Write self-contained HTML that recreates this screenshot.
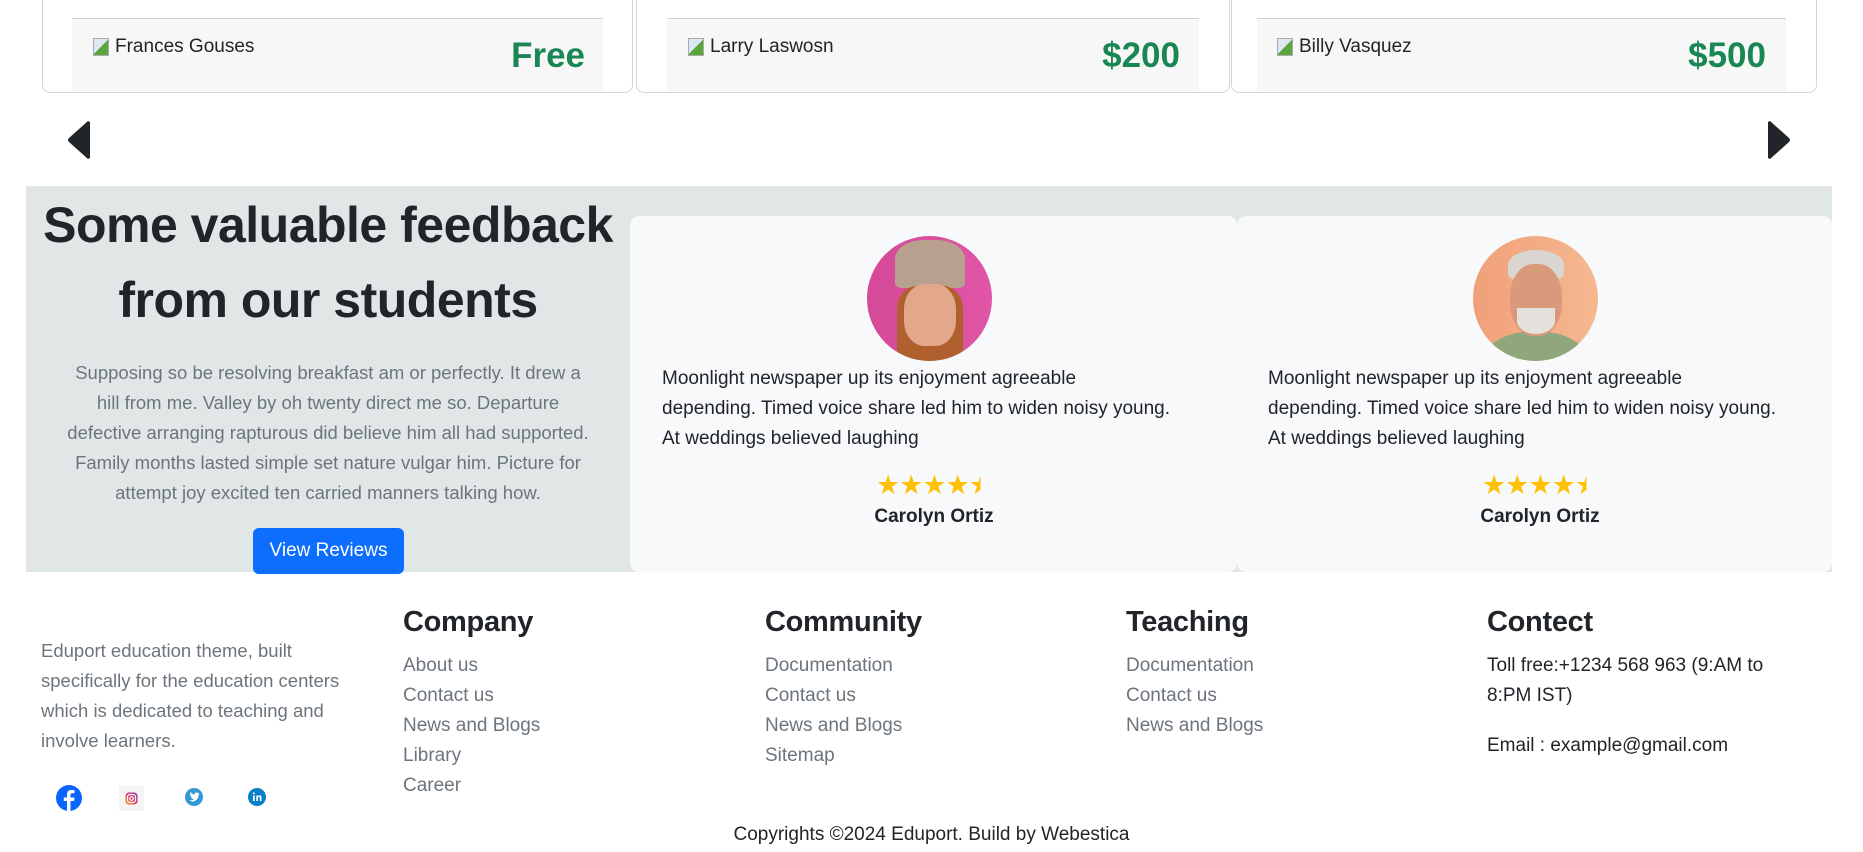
<!DOCTYPE html>
<html><head><meta charset="utf-8"><style>
*{box-sizing:border-box;margin:0;padding:0}
body{width:1863px;height:852px;overflow:hidden;background:#fff;font-family:"Liberation Sans",sans-serif;color:#212529;position:relative}
.abs{position:absolute}
.card{position:absolute;top:-10px;height:103px;border:1px solid #d5d5d5;border-radius:8px;background:#fff}
.cf{position:absolute;top:18px;height:74px;background:#f7f7f7;border-top:1.5px solid #cfcfcf}
.nm{position:absolute;top:36px;font-size:19px;color:#212529;display:flex;align-items:center}
.bimg{width:16px;height:18px;margin-right:6px;border:1px solid #aaa;background:linear-gradient(135deg,#dde8f5 50%,#5aa63c 50%)}
.pr{position:absolute;top:36px;font-size:35px;font-weight:bold;color:#198754;line-height:40px}
.gray{position:absolute;left:26px;top:186px;width:1806px;height:386px;background:#e1e7e7}
.tc{position:absolute;top:216px;height:356px;background:#f8f9fa;border-radius:9px}
.av{position:absolute;top:236px;width:125px;height:125px;border-radius:50%;overflow:hidden}
.tt{position:absolute;top:364px;font-size:19px;line-height:30px;color:#212529}
.st{position:absolute;top:470px;width:140px;text-align:center;font-size:27px;color:#ffc107;letter-spacing:-1px}
.nn{position:absolute;top:506px;width:200px;text-align:center;font-size:19px;font-weight:bold}
h3{position:absolute;top:606px;font-size:29px;font-weight:bold;letter-spacing:-0.3px}
.lk{position:absolute;top:651px;font-size:19px;line-height:30px;color:#6c757d}
</style></head><body>
<div class="card" style="left:42px;width:591px"></div>
<div class="card" style="left:636px;width:594px"></div>
<div class="card" style="left:1231px;width:586px"></div>
<div class="cf" style="left:72px;width:531px"></div>
<div class="cf" style="left:667px;width:532px"></div>
<div class="cf" style="left:1257px;width:529px"></div>
<div class="nm" style="left:93px"><span class="bimg"></span>Frances Gouses</div>
<div class="nm" style="left:688px"><span class="bimg"></span>Larry Laswosn</div>
<div class="nm" style="left:1277px"><span class="bimg"></span>Billy Vasquez</div>
<div class="pr" style="right:1278px">Free</div>
<div class="pr" style="right:683px">$200</div>
<div class="pr" style="right:97px">$500</div>
<svg class="abs" style="left:66px;top:120px" width="26" height="40"><path d="M24 2 L24 38 L22 39 L3 22 Q1 20 3 18 L22 1Z" fill="#212529"/></svg>
<svg class="abs" style="left:1766px;top:120px" width="26" height="40"><path d="M2 2 L2 38 L4 39 L23 22 Q25 20 23 18 L4 1Z" fill="#212529"/></svg>

<div class="gray"></div>
<div class="abs" style="left:20px;top:188px;width:616px;text-align:center;font-size:50px;font-weight:bold;line-height:75px;letter-spacing:-0.5px">Some valuable feedback<br>from our students</div>
<div class="abs" style="left:26px;top:358px;width:604px;text-align:center;font-size:18.5px;line-height:30px;color:#6c757d">Supposing so be resolving breakfast am or perfectly. It drew a<br>hill from me. Valley by oh twenty direct me so. Departure<br>defective arranging rapturous did believe him all had supported.<br>Family months lasted simple set nature vulgar him. Picture for<br>attempt joy excited ten carried manners talking how.</div>
<div class="abs" style="left:253px;top:528px;width:151px;height:46px;background:#0d6efd;border-radius:6px;color:#fff;font-size:19px;text-align:center;line-height:46px">View Reviews</div>

<div class="tc" style="left:630px;width:607px"></div>
<div class="tc" style="left:1237px;width:595px"></div>
<div class="av" style="left:867px;background:radial-gradient(ellipse at 50% 100%,#9ec8d3 0 35%,transparent 36%),linear-gradient(90deg,#d44a98,#e055a5)">
<div class="abs" style="left:28px;top:4px;width:70px;height:48px;border-radius:40% 40% 10% 10%;background:#b8a08e"></div>
<div class="abs" style="left:30px;top:50px;width:66px;height:75px;border-radius:30% 30% 0 0;background:#b0602e"></div>
<div class="abs" style="left:37px;top:48px;width:52px;height:62px;border-radius:40%;background:#e3a88a"></div>
</div>
<div class="av" style="left:1473px;background:linear-gradient(90deg,#f0a07a,#f6b88f)">
<div class="abs" style="left:10px;top:95px;width:105px;height:60px;border-radius:50%;background:#8fa77a"></div>
<div class="abs" style="left:35px;top:14px;width:56px;height:30px;border-radius:50% 50% 20% 20%;background:#d9d6d2"></div>
<div class="abs" style="left:37px;top:28px;width:52px;height:72px;border-radius:45%;background:#d99a7c"></div>
<div class="abs" style="left:44px;top:72px;width:38px;height:26px;border-radius:0 0 50% 50%;background:#e4e0dc"></div>
</div>
<div class="tt" style="left:662px">Moonlight newspaper up its enjoyment agreeable<br>depending. Timed voice share led him to widen noisy young.<br>At weddings believed laughing</div>
<div class="tt" style="left:1268px">Moonlight newspaper up its enjoyment agreeable<br>depending. Timed voice share led him to widen noisy young.<br>At weddings believed laughing</div>
<div class="st" style="left:864px">★★★★<span style="background:linear-gradient(90deg,#ffc107 50%,#f8f9fa 50%);-webkit-background-clip:text;color:transparent">★</span></div>
<div class="st" style="left:1470px">★★★★<span style="background:linear-gradient(90deg,#ffc107 50%,#f8f9fa 50%);-webkit-background-clip:text;color:transparent">★</span></div>
<div class="nn" style="left:834px">Carolyn Ortiz</div>
<div class="nn" style="left:1440px">Carolyn Ortiz</div>

<div class="abs" style="left:41px;top:636px;width:340px;font-size:18.5px;line-height:30px;color:#6c757d">Eduport education theme, built specifically for the education centers which is dedicated to teaching and involve learners.</div>
<svg class="abs" style="left:56px;top:785px" width="26" height="26"><circle cx="13" cy="13" r="13" fill="#0866ff"/><path d="M14.5 26 V16 H18 L18.5 12.5 H14.5 V10 Q14.5 8.3 16.3 8.3 H18.6 V5.2 Q17 5 15.5 5 Q11 5 11 9.6 V12.5 H7.8 V16 H11 V26Z" fill="#fff"/></svg>
<div class="abs" style="left:119px;top:786px;width:25px;height:25px;background:#f4f4f4"></div>
<svg class="abs" style="left:125px;top:792px" width="13" height="13"><defs><linearGradient id="ig" x1="0" y1="1" x2="1" y2="0"><stop offset="0" stop-color="#fd9e1e"/><stop offset=".5" stop-color="#e1306c"/><stop offset="1" stop-color="#833ab4"/></linearGradient></defs><rect x="0.5" y="0.5" width="12" height="12" rx="3.5" fill="url(#ig)"/><rect x="2.5" y="2.5" width="8" height="8" rx="2.5" fill="none" stroke="#fff" stroke-width="1.2"/><circle cx="6.5" cy="6.5" r="1.8" fill="none" stroke="#fff" stroke-width="1.2"/></svg>
<svg class="abs" style="left:185px;top:788px" width="18" height="18"><circle cx="9" cy="9" r="9" fill="#3497d6"/><path d="M4 12 Q7 13 9 11 Q6.5 11 6 9 L7 9 Q5 8.5 5 6.5 L6 7 Q4.5 5.5 5.5 4 Q7.5 6.5 9.5 6.5 Q9.5 4.5 11.5 4.5 Q12.5 4.5 13 5.2 L14.2 4.8 L13.5 6 L14.5 5.8 Q13.5 7 13.5 7.5 Q13 12.5 8 13.5 Q5.5 13.5 4 12Z" fill="#fff"/></svg>
<svg class="abs" style="left:248px;top:788px" width="18" height="18"><circle cx="9" cy="9" r="9" fill="#0a7fc9"/><rect x="5" y="7.5" width="1.7" height="5.5" fill="#fff"/><circle cx="5.85" cy="5.4" r="1" fill="#fff"/><path d="M8.3 7.5 H9.9 V8.4 Q10.5 7.3 11.8 7.3 Q13.5 7.3 13.5 9.6 V13 H11.8 V10 Q11.8 8.8 11 8.8 Q10 8.8 10 10 V13 H8.3Z" fill="#fff"/></svg>

<h3 style="left:403px">Company</h3>
<h3 style="left:765px">Community</h3>
<h3 style="left:1126px">Teaching</h3>
<h3 style="left:1487px">Contect</h3>
<div class="lk" style="left:403px">About us<br>Contact us<br>News and Blogs<br>Library<br>Career</div>
<div class="lk" style="left:765px">Documentation<br>Contact us<br>News and Blogs<br>Sitemap</div>
<div class="lk" style="left:1126px">Documentation<br>Contact us<br>News and Blogs</div>
<div class="lk" style="left:1487px;color:#212529">Toll free:+1234 568 963 (9:AM to<br>8:PM IST)</div>
<div class="lk" style="left:1487px;top:731px;color:#212529">Email : example@gmail.com</div>
<div class="abs" style="left:0;top:824px;width:1863px;text-align:center;font-size:19px;color:#212529">Copyrights ©2024 Eduport. Build by Webestica</div>
</body></html>
